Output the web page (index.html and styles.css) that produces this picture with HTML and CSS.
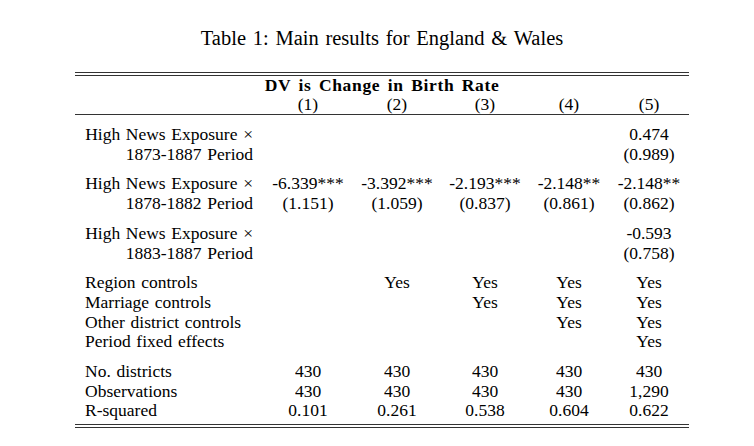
FILE: index.html
```html
<!DOCTYPE html>
<html lang="en">
<head>
<meta charset="utf-8">
<title>Table 1: Main results for England &amp; Wales</title>
<link rel="stylesheet" href="styles.css">
</head>
<body>
<div class="page">
  <h1 class="caption">Table 1: Main results for England &amp; Wales</h1>
  <div class="double-rule"></div>
  <table class="results">
    <colgroup>
      <col class="c-label"><col class="c-1"><col class="c-2"><col class="c-3"><col class="c-4"><col class="c-5">
    </colgroup>
    <thead>
      <tr class="head-row"><th colspan="6" class="dv-title">DV is Change in Birth Rate</th></tr>
      <tr class="head-row col-labels"><th></th><th>(1)</th><th>(2)</th><th>(3)</th><th>(4)</th><th>(5)</th></tr>
    </thead>
    <tbody>
      <tr class="group-start"><td class="label label-r">High News Exposure ×</td><td></td><td></td><td></td><td></td><td>0.474</td></tr>
      <tr><td class="label label-r">1873-1887 Period</td><td></td><td></td><td></td><td></td><td>(0.989)</td></tr>

      <tr class="group-start"><td class="label label-r">High News Exposure ×</td><td>-6.339***</td><td>-3.392***</td><td>-2.193***</td><td>-2.148**</td><td>-2.148**</td></tr>
      <tr><td class="label label-r">1878-1882 Period</td><td>(1.151)</td><td>(1.059)</td><td>(0.837)</td><td>(0.861)</td><td>(0.862)</td></tr>

      <tr class="group-start"><td class="label label-r">High News Exposure ×</td><td></td><td></td><td></td><td></td><td>-0.593</td></tr>
      <tr><td class="label label-r">1883-1887 Period</td><td></td><td></td><td></td><td></td><td>(0.758)</td></tr>

      <tr class="group-start"><td class="label">Region controls</td><td></td><td>Yes</td><td>Yes</td><td>Yes</td><td>Yes</td></tr>
      <tr><td class="label">Marriage controls</td><td></td><td></td><td>Yes</td><td>Yes</td><td>Yes</td></tr>
      <tr><td class="label">Other district controls</td><td></td><td></td><td></td><td>Yes</td><td>Yes</td></tr>
      <tr><td class="label">Period fixed effects</td><td></td><td></td><td></td><td></td><td>Yes</td></tr>

      <tr class="group-start"><td class="label">No. districts</td><td>430</td><td>430</td><td>430</td><td>430</td><td>430</td></tr>
      <tr><td class="label">Observations</td><td>430</td><td>430</td><td>430</td><td>430</td><td>1,290</td></tr>
      <tr class="last-row"><td class="label">R-squared</td><td>0.101</td><td>0.261</td><td>0.538</td><td>0.604</td><td>0.622</td></tr>
    </tbody>
  </table>
  <div class="double-rule"></div>
</div>
</body>
</html>
```
FILE: styles.css
```css
html, body {
  margin: 0;
  background: #fff;
}
body {
  font-family: "Liberation Serif", "Times New Roman", serif;
  color: #000;
}
.page {
  width: 614px;
  margin-left: 75px;
  padding-top: 26px;
}
.caption {
  margin: 0 0 22px;
  font-size: 20.5px;
  font-weight: normal;
  line-height: 24px;
  text-align: center;
  letter-spacing: 0;
  word-spacing: 1.6px;
}
.double-rule {
  height: 2px;
  border-top: 1px solid #333;
  border-bottom: 1px solid #333;
}
.results {
  width: 100%;
  table-layout: fixed;
  border-collapse: separate;
  border-spacing: 0;
  font-size: 17.5px;
  line-height: 19.7px;
  letter-spacing: 0;
  word-spacing: 1.3px;
}
.c-label { width: 188px; }
.c-1 { width: 90px; }
.c-2 { width: 88px; }
.c-3 { width: 88px; }
.c-4 { width: 80px; }
.c-5 { width: 80px; }
.results th,
.results td {
  padding: 0;
  text-align: center;
  font-weight: normal;
  white-space: nowrap;
}
.head-row th {
  line-height: 19px;
}
.results .dv-title {
  font-weight: bold;
  letter-spacing: 0.65px;
  word-spacing: 2.5px;
}
.col-labels th {
  border-bottom: 1px solid #333;
}
.results td.label {
  text-align: left;
  padding-left: 10px;
  padding-right: 10px;
}
.results td.label-r {
  text-align: right;
}
.group-start td {
  padding-top: 10px;
}
.results .last-row td {
  padding-bottom: 3px;
}
```
